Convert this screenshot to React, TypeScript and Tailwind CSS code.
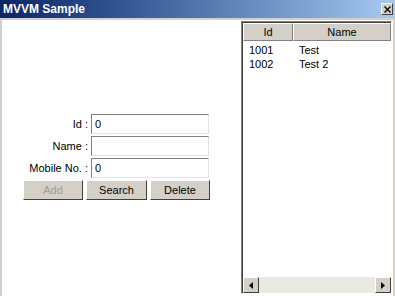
export default function App() {
  const rows = [
    { id: "1001", name: "Test" },
    { id: "1002", name: "Test 2" },
  ];
  return (
    <div className="w-[395px] h-[296px] flex flex-col bg-[#d4d0c8] font-['Liberation_Sans',Arial,sans-serif] text-[11px] text-black overflow-hidden">
      {/* title bar */}
      <div className="h-[18px] flex items-center justify-between bg-gradient-to-r from-[#0a246a] to-[#a6caf0] pl-[3px] pr-[2px]">
        <span className="text-white font-bold text-[12px] leading-none">MVVM Sample</span>
        <div className="w-[12px] h-[12px] bg-[#d4d0c8] border-t border-l border-white border-r border-b border-r-[#404040] border-b-[#404040] flex items-center justify-center">
          <svg width="7" height="7" viewBox="0 0 7 7">
            <path d="M0.5 0.5 L6.5 6.5 M6.5 0.5 L0.5 6.5" stroke="#000" strokeWidth="1.3" />
          </svg>
        </div>
      </div>
      {/* body */}
      <div className="flex-1 flex bg-white ml-[2px] mr-[2px] mt-[1px] border-t border-[#d4d0c8]">
        {/* form */}
        <div className="w-[239px] flex flex-col justify-center pl-[21px] pb-[2px]">
          <div className="grid grid-cols-[65px_118px] gap-x-[3px] gap-y-[2px] items-center">
            {["Id :", "Name :", "Mobile No. :"].map((label, i) => (
              <div key={label} className="contents">
                <span className="text-right leading-none">{label}</span>
                <div className="h-[20px] bg-white border-t border-l border-[#808080] border-r border-b border-r-[#e4e2dc] border-b-[#e4e2dc] flex items-center pl-[3px]">
                  <span className="leading-none">{i === 1 ? "" : "0"}</span>
                </div>
              </div>
            ))}
          </div>
          <div className="flex gap-[3px] mt-[2px]">
            <button className="w-[60px] h-[20px] bg-[#d4d0c8] border-t border-l border-white border-r border-b border-r-[#404040] border-b-[#404040] text-[#a09c94] leading-none">Add</button>
            <button className="w-[61px] h-[20px] bg-[#d4d0c8] border-t border-l border-white border-r border-b border-r-[#404040] border-b-[#404040] leading-none">Search</button>
            <button className="w-[60px] h-[20px] bg-[#d4d0c8] border-t border-l border-white border-r border-b border-r-[#404040] border-b-[#404040] leading-none">Delete</button>
          </div>
        </div>
        {/* list */}
        <div className="w-[151px] mt-[1px] mb-[2px] flex flex-col bg-white border-t border-l border-[#808080] border-r border-b border-r-[#ffffff] border-b-[#ffffff]">
          <div className="flex-1 flex flex-col border-t border-l border-[#404040]">
            <div className="flex h-[18px]">
              <div className="w-[50px] bg-[#d4d0c8] border-t border-l border-white border-r border-b border-r-[#808080] border-b-[#808080] flex items-center justify-center leading-none">Id</div>
              <div className="flex-1 bg-[#d4d0c8] border-t border-l border-white border-r border-b border-r-[#808080] border-b-[#808080] flex items-center justify-center leading-none">Name</div>
            </div>
            <div className="flex-1 pt-[2px]">
              {rows.map((r) => (
                <div key={r.id} className="flex h-[14px] items-center leading-none">
                  <span className="w-[56px] pl-[6px]">{r.id}</span>
                  <span>{r.name}</span>
                </div>
              ))}
            </div>
            {/* horizontal scrollbar */}
            <div className="h-[16px] flex bg-[#ebe9e3]">
              <div className="w-[16px] h-[16px] bg-[#d4d0c8] border-t border-l border-white border-r border-b border-r-[#404040] border-b-[#404040] flex items-center justify-center">
                <svg width="4" height="7" viewBox="0 0 4 7"><path d="M4 0 L0 3.5 L4 7 Z" fill="#000" /></svg>
              </div>
              <div className="flex-1" />
              <div className="w-[16px] h-[16px] bg-[#d4d0c8] border-t border-l border-white border-r border-b border-r-[#404040] border-b-[#404040] flex items-center justify-center">
                <svg width="4" height="7" viewBox="0 0 4 7"><path d="M0 0 L4 3.5 L0 7 Z" fill="#000" /></svg>
              </div>
            </div>
          </div>
        </div>
      </div>
    </div>
  );
}
